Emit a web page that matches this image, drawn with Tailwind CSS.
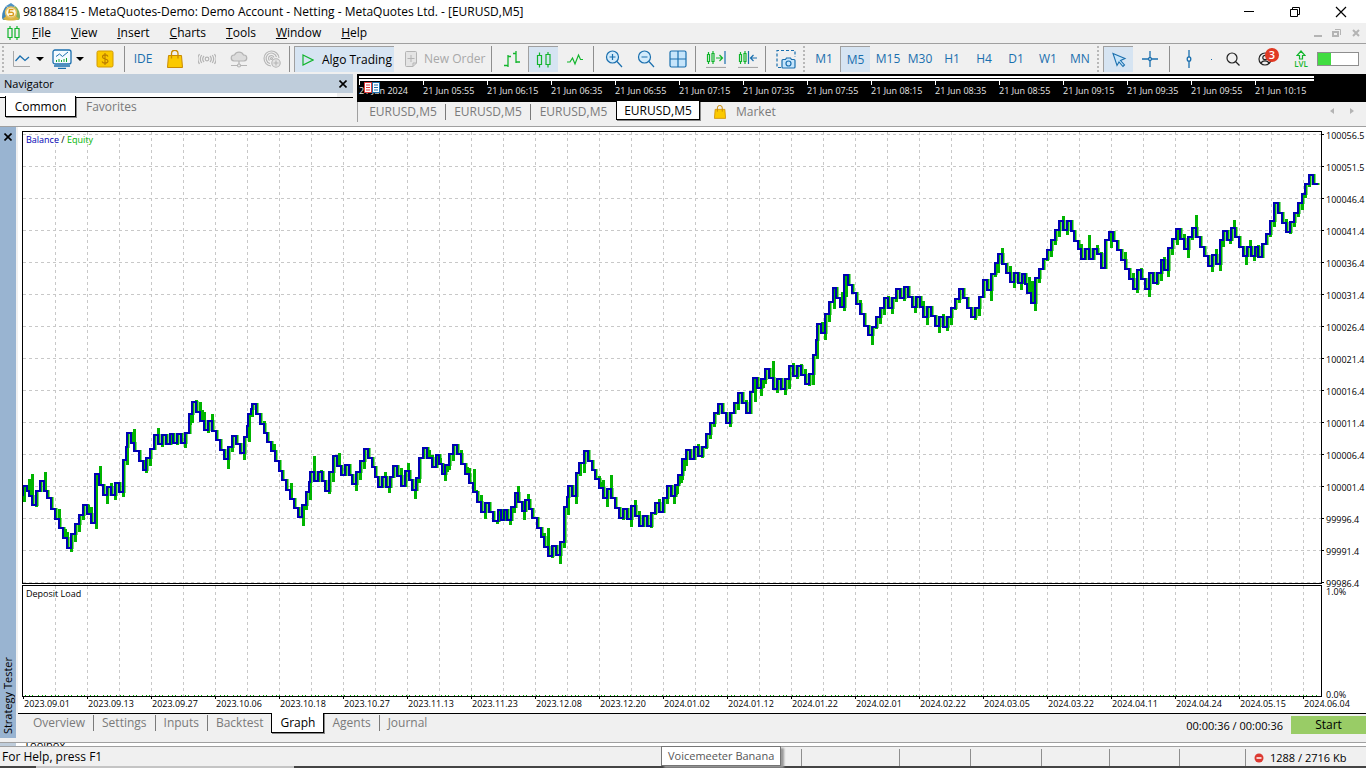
<!DOCTYPE html>
<html lang="en">
<head>
    <meta charset="UTF-8">
    <meta name="viewport" content="width=device-width, initial-scale=1.0">
    <title>MetaTrader 5 - Strategy Tester</title>
    <script src="https://cdn.jsdelivr.net/npm/@tailwindcss/browser@4"></script>
</head>
<body class="h-screen flex flex-col overflow-hidden bg-[#f0f0f0] text-black text-[12px] leading-4 font-['Open_Sans',sans-serif]">

    <!-- shared icons -->
    <svg class="hidden">
        <symbol id="bag" viewBox="0 0 16 18">
            <path d="M1.500 5.500h13l1 12H.5z" fill="#fbc900" stroke="#c98a00"/>
            <path d="M4.500 8.500V3.500a3 3 0 0 1 6.500 0v5" fill="none" stroke="#c98a00" stroke-width="1.300"/>
        </symbol>
    </svg>

    <header class="h-[23px] shrink-0 bg-white flex items-center">
        <svg class="w-5 h-5 ml-px" viewBox="0 0 20 20">
            <path d="M5 4 10 1l4 3-4 3z" fill="#4f93c4"/>
            <path d="M1 15c0-5 2-8 4-11l4 5v9H3c-1.500 0-2-1.500-2-3z" fill="#3f86ba"/>
            <path d="M19 15c0-5-2-9-5-11l-4 5v9h7c1.500 0 2-1.500 2-3z" fill="#7faf5d"/>
            <path d="M2 17c4 2 12 2 16 0l-3-3H5z" fill="#d9b23f"/>
            <circle cx="10" cy="10.500" r="5.500" fill="#fffbe9" stroke="#e3bf5c" stroke-width="1.500"/>
            <path d="M12.500 7.500h-4l-.5 3c3-.8 4.500 0 4.500 1.500 0 2-2.500 2.300-4.500 1.300" fill="none" stroke="#d89a1c" stroke-width="1.500"/>
        </svg>
        <h1 class="ml-0.5 flex-1">98188415 - MetaQuotes-Demo: Demo Account - Netting - MetaQuotes Ltd. - [EURUSD,M5]</h1>
        <button class="w-[46px] h-full flex items-center justify-center" aria-label="Minimize"><svg class="w-3 h-3" viewBox="0 0 12 12"><path d="M1 5.500h10" stroke="#000"/></svg></button>
        <button class="w-[46px] h-full flex items-center justify-center" aria-label="Restore"><svg class="w-3 h-3" viewBox="0 0 12 12" fill="none" stroke="#000"><path d="M1.500 3.500h7v7h-7zM3.500 3V1.500h7v7H9"/></svg></button>
        <button class="w-[46px] h-full mr-0.5 flex items-center justify-center" aria-label="Close"><svg class="w-3 h-3" viewBox="0 0 12 12"><path d="M1 1l10 10M11 1 1 11" stroke="#000" stroke-width="1.200"/></svg></button>
    </header>

    <nav class="h-[21px] shrink-0 border-b border-[#a0a0a0] flex items-center pl-[7px] pr-1.5">
        <svg class="w-3.5 h-4 mr-[11px]" viewBox="0 0 14 16" fill="none" stroke="#12b52c" stroke-width="1.200"><path d="M1 3.500h4v9H1zM3 1v2.500M3 12.500V15M8 3.500h4v9H8zM10 1v2.500M10 12.500V15"/></svg>
        <div class="flex-1 flex gap-5">
            <a href="#"><u>F</u>ile</a>
            <a href="#"><u>V</u>iew</a>
            <a href="#"><u>I</u>nsert</a>
            <a href="#"><u>C</u>harts</a>
            <a href="#"><u>T</u>ools</a>
            <a href="#"><u>W</u>indow</a>
            <a href="#"><u>H</u>elp</a>
        </div>
        <div class="flex items-center gap-2.5">
            <button aria-label="Minimize chart"><svg class="w-2 h-2" viewBox="0 0 8 8"><path d="M0 7h8" stroke="#b4b4b4" stroke-width="2"/></svg></button>
            <button aria-label="Restore chart"><svg class="w-2.5 h-2" viewBox="0 0 10 8" fill="none" stroke="#b4b4b4"><path d="M1 3h5v4H1z" stroke-width="2"/><path d="M3 .5h5.500V6"/></svg></button>
            <button aria-label="Close chart"><svg class="w-2 h-2" viewBox="0 0 8 8"><path d="M1 1l6 6M7 1 1 7" stroke="#b4b4b4" stroke-width="2"/></svg></button>
        </div>
    </nav>

    <div class="h-[30px] shrink-0 flex items-stretch py-0.5 text-[#1a6fae]">
        <span class="w-2 border-l-2 border-dotted border-[#b8b8b8] ml-0.5 -mr-0.5"></span>
        <button class="w-10 flex items-center gap-1.5 pl-1" aria-label="Chart type">
            <svg class="w-[18px] h-5" viewBox="0 0 18 20" fill="none"><path d="M1.500 2v15.500H18" stroke="#a8a8a8"/><path d="M3.500 12 8 7l5 4.500 4-3.500" stroke="#1a6fae" stroke-width="1.300"/></svg>
            <svg class="w-2 h-1" viewBox="0 0 8 4"><path d="M0 0h8L4 4z"/></svg>
        </button>
        <button class="w-10 flex items-center gap-1 pl-1" aria-label="Indicators">
            <svg class="w-5 h-5 shrink-0" viewBox="0 0 20 20" fill="none"><rect x="1" y="1" width="18" height="14" rx="2" fill="#f4faff" stroke="#1a6fae" stroke-width="1.300"/><path d="M4 7.500 7.500 5l3 2.500L16 3" stroke="#1a6fae"/><path d="M4.500 13v-2M7 13v-3M9.500 13v-2M12 13v-3M14.500 13V9" stroke="#12a52c"/><path d="M2 17h16M6 19.500h8" stroke="#1a6fae" stroke-width="1.300"/></svg>
            <svg class="w-2 h-1 shrink-0" viewBox="0 0 8 4"><path d="M0 0h8L4 4z"/></svg>
        </button>
        <button class="w-[33px] flex items-center justify-center" aria-label="Symbols">
            <svg class="w-[18px] h-[18px]" viewBox="0 0 18 18"><rect x="1" y="1" width="16" height="16" rx="1.500" fill="#fbc900" stroke="#d29a00"/><path d="M12 6.500C11 4 6.500 4.500 6.500 7S12 8.500 12 11s-5 3-6 .5M9 3v12" fill="none" stroke="#b87a00" stroke-width="1.100"/></svg>
        </button>
        <span class="w-1.5 flex justify-center"><i class="w-px bg-[#8e8e8e]"></i></span>
        <button class="w-8 text-center">IDE</button>
        <button class="w-8 flex items-center justify-center" aria-label="Market"><svg class="w-4 h-[18px]"><use href="#bag"/></svg></button>
        <button class="w-8 flex items-center justify-center" aria-label="Signals"><svg class="w-[18px] h-[18px]" viewBox="0 0 18 18" fill="none" stroke="#b4b4b4" stroke-width="1.200"><circle cx="9" cy="9" r="1.800"/><path d="M6 6a4.500 4.500 0 0 0 0 6M12 6a4.500 4.500 0 0 1 0 6M3.700 5a7 7 0 0 0 0 8M14.300 5a7 7 0 0 1 0 8M1.500 4a9 9 0 0 0 0 10M16.500 4a9 9 0 0 1 0 10"/></svg></button>
        <button class="w-8 flex items-center justify-center" aria-label="Virtual hosting"><svg class="w-[18px] h-[18px]" viewBox="0 0 18 18" fill="none" stroke="#b4b4b4" stroke-width="1.200"><path d="M4 11a3 3 0 0 1 .5-6A5 5 0 0 1 13.500 5 3 3 0 0 1 14 11z" fill="#dcdcdc"/><path d="M9 11v3M1 15.500h6.500M10.500 15.500H17"/><circle cx="9" cy="15.500" r="1.500"/></svg></button>
        <button class="w-[33px] flex items-center justify-center" aria-label="Network agents"><svg class="w-[18px] h-[18px]" viewBox="0 0 18 18" fill="none" stroke="#b4b4b4" stroke-width="1.100"><path d="M8 16A7.500 7.500 0 1 1 16 8M7 13.500A5.300 5.300 0 1 1 13.500 7M6.500 10.500A2.800 2.800 0 1 1 11 7.500"/><circle cx="8.500" cy="8.500" r="1"/><circle cx="13" cy="13" r="4.200" fill="#e4e4e4"/><path d="M13 10.500v5M10.500 13h5"/></svg></button>
        <span class="w-1.5 pl-px"><i class="block h-full w-px bg-[#8e8e8e]"></i></span>
        <button class="w-[100px] flex items-center gap-2 pl-[7px] bg-[#d6e4f2] border-l border-t border-[#a0a0a0] text-black whitespace-nowrap">
            <svg class="w-3 h-3 shrink-0" viewBox="0 0 12 12"><path d="M1 1l10 5-10 5z" fill="none" stroke="#12b52c" stroke-width="1.200"/></svg>
            Algo Trading
        </button>
        <button class="w-24 flex items-center gap-1.5 pl-2.5 text-[#a8a8a8] whitespace-nowrap">
            <svg class="w-3.5 h-[18px] shrink-0" viewBox="0 0 14 18" fill="#e4e4e4" stroke="#b4b4b4"><path d="M2.500 1.500h9a1 1 0 0 1 1 1V13l-3.500 3.500H2.500a1 1 0 0 1-1-1v-13a1 1 0 0 1 1-1zM9 16.500V13h3.500M7 5v7M3.500 8.500h7"/></svg>
            New Order
        </button>
        <span class="w-1.5 pl-px"><i class="block h-full w-px bg-[#8e8e8e]"></i></span>
        <button class="w-8 flex items-center justify-center" aria-label="Bar chart"><svg class="w-[18px] h-[18px]" viewBox="0 0 18 18" fill="none" stroke="#12b52c" stroke-width="1.300"><path d="M5 5v12M1 15.500h4M5 6.500h3M13 1v12M10 3.500h3M13 12h4"/></svg></button>
        <button class="w-[30px] flex items-center justify-center bg-[#d6e4f2] border-l border-t border-[#a0a0a0]" aria-label="Candlesticks"><svg class="w-4 h-[18px]" viewBox="0 0 16 18" fill="none" stroke="#12b52c" stroke-width="1.200"><path d="M1.500 4.500h4v9h-4zM3.500 1.500v3M3.500 13.500v3M10 3.500h4v10h-4zM12 1v2.500M12 13.500v3"/></svg></button>
        <button class="w-[34px] flex items-center justify-center" aria-label="Line chart"><svg class="w-[18px] h-[18px]" viewBox="0 0 18 18" fill="none" stroke="#12b52c" stroke-width="1.200"><path d="M1 12h3l2.500-4L9 14l3.500-9 2 4.500H17"/></svg></button>
        <span class="w-1.5 pl-px"><i class="block h-full w-px bg-[#8e8e8e]"></i></span>
        <button class="w-8 flex items-center justify-center" aria-label="Zoom in"><svg class="w-[18px] h-[18px]" viewBox="0 0 18 18" fill="#d3ebfb" stroke="#1a6fae" stroke-width="1.200"><circle cx="7.500" cy="7" r="6"/><path d="M12 11.500l5 5.500M4.500 7h6M7.500 4v6"/></svg></button>
        <button class="w-8 flex items-center justify-center" aria-label="Zoom out"><svg class="w-[18px] h-[18px]" viewBox="0 0 18 18" fill="#d3ebfb" stroke="#1a6fae" stroke-width="1.200"><circle cx="7.500" cy="7" r="6"/><path d="M12 11.500l5 5.500M4.500 7h6"/></svg></button>
        <button class="w-8 flex items-center justify-center" aria-label="Tile windows"><svg class="w-[18px] h-[18px]" viewBox="0 0 18 18" fill="#c6e5fb" stroke="#1a6fae" stroke-width="1.200"><rect x="1" y="1" width="16" height="16" rx="1.500"/><path d="M9 1v16M1 9h16"/></svg></button>
        <span class="w-1.5 pl-px"><i class="block h-full w-px bg-[#8e8e8e]"></i></span>
        <button class="w-8 flex items-center justify-center" aria-label="Auto scroll"><svg class="w-5 h-[18px]" viewBox="0 0 20 18" fill="none" stroke="#12b52c" stroke-width="1.200"><path d="M1.500 4.500h2v7h-2zM2.500 2v2.500M2.500 11.500V14M6 3.500h2v8H6zM7 1v2.500M7 11.500V14M10 8h6M13.500 5l3 3-3 3"/><path d="M19 1v13" stroke="#1a6fae"/><path d="M0 17.500h20" stroke="#a8a8a8"/></svg></button>
        <button class="w-8 flex items-center justify-center" aria-label="Chart shift"><svg class="w-5 h-[18px]" viewBox="0 0 20 18" fill="none" stroke="#12b52c" stroke-width="1.200"><path d="M1.500 4.500h2v7h-2zM2.500 2v2.500M2.500 11.500V14M6 3.500h2v8H6zM7 1v2.500M7 11.500V14"/><path d="M10.500 1v13M19 8h-6M15.500 5l-3 3 3 3" stroke="#1a6fae"/><path d="M0 17.500h20" stroke="#a8a8a8"/></svg></button>
        <span class="w-1.5 pl-px"><i class="block h-full w-px bg-[#8e8e8e]"></i></span>
        <button class="w-8 flex items-center justify-center" aria-label="Screenshot"><svg class="w-5 h-5" viewBox="0 0 20 20" fill="none" stroke="#1a6fae" stroke-width="1.200"><path d="M5 18.500H1v-17h18V8" stroke-dasharray="3 2"/><path d="M7 10.500h2.500l1-1.500h4l1 1.500H18a1 1 0 0 1 1 1V18a1 1 0 0 1-1 1H7a1 1 0 0 1-1-1v-6.500a1 1 0 0 1 1-1z" fill="#c6e5fb"/><circle cx="12.500" cy="14.500" r="2.500"/></svg></button>
        <span class="w-1.5 pl-px"><i class="block h-full border-l-2 border-dotted border-[#b8b8b8]"></i></span>
        <button class="w-8">M1</button>
        <button class="w-[30px] mr-0.5 bg-[#d6e4f2] border-l border-t border-[#a0a0a0]">M5</button>
        <button class="w-8">M15</button>
        <button class="w-8">M30</button>
        <button class="w-8">H1</button>
        <button class="w-8">H4</button>
        <button class="w-8">D1</button>
        <button class="w-8">W1</button>
        <button class="w-8">MN</button>
        <span class="w-[7px] pl-px"><i class="block h-full border-l-2 border-dotted border-[#b8b8b8]"></i></span>
        <button class="w-[30px] flex items-center justify-center bg-[#d6e4f2] border-l border-t border-[#a0a0a0]" aria-label="Cursor"><svg class="w-4 h-4" viewBox="0 0 16 16"><path d="M2 1.500l12 5-4.500 2 4 4.500-1.500 1.500-4-4.500L6 13.500z" fill="#c6e5fb" stroke="#1a6fae" stroke-width="1.100"/></svg></button>
        <button class="w-[34px] flex items-center justify-center" aria-label="Crosshair"><svg class="w-[18px] h-[18px]" viewBox="0 0 18 18" fill="none" stroke="#1a6fae" stroke-width="1.300"><path d="M9 1v6M9 11v6M1 9h6M11 9h6M7 9l2-2 2 2-2 2z"/></svg></button>
        <span class="w-1.5 pl-0.5"><i class="block h-full w-px bg-[#8e8e8e]"></i></span>
        <button class="w-8 flex items-center justify-center" aria-label="Vertical line"><svg class="w-[18px] h-[18px]" viewBox="0 0 18 18" fill="none" stroke="#1a6fae" stroke-width="1.300"><path d="M9 0v7M9 11v7"/><ellipse cx="9" cy="9" rx="1.800" ry="2.200"/></svg></button>
        <span class="w-3 flex items-center justify-center"><i class="w-px h-px bg-[#1a6fae]"></i></span>
        <button class="w-8 flex items-center justify-center" aria-label="Search"><svg class="w-3.5 h-3.5" viewBox="0 0 14 14" fill="none" stroke="#222" stroke-width="1.200"><circle cx="6" cy="6" r="5"/><path d="M9.500 9.500 13.500 13.500"/></svg></button>
        <button class="relative w-8 flex items-center justify-center" aria-label="Account, 3 messages">
            <svg class="w-3.5 h-3.5" viewBox="0 0 14 14" fill="none" stroke="#222" stroke-width="1.200"><circle cx="7" cy="7" r="6"/><circle cx="7" cy="5.500" r="2.200"/><path d="M3 11.500c1-3.500 7-3.500 8 0"/></svg>
            <span class="absolute left-4 top-0.5 w-3.5 h-3.5 rounded-full bg-[#e03a24] text-white text-[11px] leading-3.5 font-semibold text-center">3</span>
        </button>
        <button class="w-9 pl-1 flex flex-col items-center justify-center text-[#12b52c]" aria-label="Level">
            <svg class="w-2.5 h-2.5" viewBox="0 0 10 10" fill="none" stroke="#12b52c" stroke-width="1.200"><path d="M3.500 9V5.500H1L5 1l4 4.500H6.500V9z"/></svg>
            <span class="text-[8px] leading-2 font-semibold">LVL</span>
        </button>
        <span class="self-center w-[42px] h-3.5 border border-[#8e8e8e] bg-white"><i class="block w-[13px] h-full bg-[#41dd41]"></i></span>
    </div>

    <div class="h-[53px] shrink-0 border-b border-[#a0a0a0] flex">
        <section class="w-[353px] shrink-0 flex flex-col">
            <div class="h-[19px] bg-[#bfcddb] flex items-center justify-between pl-1 pr-1.5 text-[11px]">
                <h2>Navigator</h2>
                <button aria-label="Close navigator"><svg class="w-2 h-2" viewBox="0 0 8 8"><path d="M.5.5l7 7M7.500.5l-7 7" stroke="#000" stroke-width="1.600"/></svg></button>
            </div>
            <div class="h-1 bg-white mr-4"></div>
            <div class="flex items-start text-[#7a7a7a]">
                <span class="w-[5px] border-t border-black"></span>
                <button class="w-[71px] h-[21px] -mt-px pt-0.5 bg-white border-x border-b border-black text-black shadow-[1px_1px_0_#888]">Common</button>
                <button class="flex-1 border-t border-black text-left pl-2.5 pt-px">Favorites</button>
            </div>
        </section>
        <section class="flex-1 min-w-0 ml-1 flex flex-col">
            <div class="relative h-7 pt-0.5 bg-black text-[#e6e6e6] text-[9px] leading-3 overflow-hidden">
                <div class="h-[5px] ml-0.5 mr-[52px] border-y-2 border-white"></div>
                <div id="ruler" class="flex pl-0.5"></div>
                <svg class="absolute left-[7px] top-2 w-4 h-3" viewBox="0 0 16 12"><path d="M.5.5h7v10h-7z" fill="#fff" stroke="#e03a3a"/><path d="M8.500.5h7v10h-7z" fill="#fff" stroke="#1a6fae"/><path d="M2 3h4M2 5.500h4M2 8h4" stroke="#e03a3a"/><path d="M10 3h4M10 5.500h4M10 8h4" stroke="#1a6fae"/></svg>
            </div>
            <div class="flex-1 flex items-start text-[#7a7a7a]">
                <span class="w-1 h-5 border-l border-[#a0a0a0]"></span>
                <button class="w-[85px] h-4 mt-0.5 border-r border-[#7a7a7a]">EURUSD,M5</button>
                <button class="w-[85px] h-4 mt-0.5 border-r border-[#7a7a7a]">EURUSD,M5</button>
                <button class="w-[85px] h-4 mt-0.5">EURUSD,M5</button>
                <button class="w-[84px] h-[19px] -mt-px pt-0.5 bg-white border border-t-0 border-black text-black shadow-[1px_1px_0_#888] z-10">EURUSD,M5</button>
                <button class="flex items-center gap-2.5 ml-3.5 mt-0.5"><svg class="w-3 h-3.5"><use href="#bag"/></svg>Market</button>
                <div class="ml-auto mr-3 mt-1.5 flex gap-4">
                    <button aria-label="Previous tab"><svg class="w-1 h-1.5" viewBox="0 0 4 6"><path d="M4 0v6L0 3z" fill="#b4b4b4"/></svg></button>
                    <button aria-label="Next tab"><svg class="w-1 h-1.5" viewBox="0 0 4 6"><path d="M0 0v6l4-3z" fill="#b4b4b4"/></svg></button>
                </div>
            </div>
        </section>
    </div>

    <main class="flex-1 min-h-0 flex">
        <aside class="w-4 shrink-0 mb-1 mr-0.5 bg-[#99b4d1] flex flex-col items-center justify-between pt-1.5 pb-1">
            <button aria-label="Close tester"><svg class="w-2 h-2" viewBox="0 0 8 8"><path d="M.5.5l7 7M7.500.5l-7 7" stroke="#000" stroke-width="1.600"/></svg></button>
            <h2 class="[writing-mode:vertical-rl] rotate-180 text-[11px] leading-4">Strategy Tester</h2>
        </aside>
        <section class="flex-1 min-w-0 flex flex-col">
            <div class="flex-1 min-h-0 flex flex-col bg-white pl-1 pt-1 text-[9px] leading-[9px]">
                <div class="flex-1 min-h-0 flex">
                    <div class="relative flex-1 min-w-0 border border-black">
                        <svg id="plot" class="absolute inset-0 w-full h-full" fill="none"></svg>
                        <p class="relative pl-[3px] pt-[3px]"><span class="text-[#0000b4]">Balance</span> / <span class="text-[#00b400]">Equity</span></p>
                    </div>
                    <div id="values" class="w-[44px] shrink-0"></div>
                </div>
                <div class="h-28 shrink-0 mt-px flex">
                    <div class="relative flex-1 min-w-0 border border-black">
                        <svg id="load" class="absolute inset-0 w-full h-full" fill="none"></svg>
                        <p class="relative pl-[3px] pt-[3px]">Deposit Load</p>
                    </div>
                    <div class="w-[44px] shrink-0 flex flex-col justify-between pl-1 pt-[3px] leading-2">
                        <span>1.0%</span><span class="-mb-0.5">0.0%</span>
                    </div>
                </div>
                <div id="dates" class="h-4 shrink-0 flex pl-px overflow-hidden"></div>
            </div>
            <div class="h-[29px] shrink-0 flex items-stretch text-[#7a7a7a]">
                <div class="flex-1 flex items-start">
                    <div class="flex border-t border-black pl-[7px] h-[18px] items-end">
                        <button class="px-2 border-r border-[#7a7a7a]">Overview</button>
                        <button class="px-2 border-r border-[#7a7a7a]">Settings</button>
                        <button class="px-2 border-r border-[#7a7a7a]">Inputs</button>
                        <button class="px-2">Backtest</button>
                    </div>
                    <button class="h-5 px-2 bg-white border border-t-0 border-black text-black shadow-[1px_1px_0_#888]">Graph</button>
                    <div class="flex-1 flex border-t border-black h-[18px] items-end">
                        <button class="px-2 border-r border-[#7a7a7a]">Agents</button>
                        <button class="px-2">Journal</button>
                    </div>
                </div>
                <div class="border-t border-black flex items-start pt-0.5 text-black text-[11px]">
                    <span class="pt-0.5 pr-2">00:00:36 / 00:00:36</span>
                    <button class="w-[75px] h-[18px] bg-[#99cc66] text-[12px]">Start</button>
                </div>
            </div>
        </section>
    </main>

    <div class="h-[5px] shrink-0 border-y border-[#a0a0a0] bg-white overflow-hidden flex">
        <span class="w-4 bg-[#bfcddb]"></span>
        <span class="pl-2 text-[11px] leading-1">Toolbox</span>
    </div>
    <footer class="relative h-[19px] shrink-0 flex items-center pl-0.5">
        <span class="flex-1">For Help, press F1</span>
        <div class="h-full pt-0.5 flex">
            <span class="w-[98px] border-l border-[#8e8e8e]"></span>
            <span class="w-[71px] border-l border-[#8e8e8e]"></span>
            <span class="w-[71px] border-l border-[#8e8e8e]"></span>
            <span class="w-[68px] border-l border-[#8e8e8e]"></span>
            <span class="w-[70px] border-l border-[#8e8e8e]"></span>
            <span class="w-[66px] border-l border-[#8e8e8e]"></span>
            <span class="w-[121px] border-l border-[#8e8e8e] flex items-center gap-1.5 pl-2">
                <svg class="w-2.5 h-2.5" viewBox="0 0 10 10"><circle cx="5" cy="5" r="4.500" fill="#dc3a32"/><path d="M2.500 5h5" stroke="#fff" stroke-width="1.500"/></svg>
                <span class="text-[11px]">1288 / 2716 Kb</span>
            </span>
        </div>
        <div class="absolute left-[661px] -top-px h-5 px-1.5 border border-[#767676] bg-white text-[#575757] text-[11px] leading-[18px] shadow-[3px_2px_2px_#999] z-10" role="tooltip">Voicemeeter Banana</div>
    </footer>
    <div class="h-0.5 shrink-0 bg-[#444] pl-9"><i class="block w-[258px] h-full bg-[#c4c4c4]"></i></div>

    <script>
        const times = ["21 Jun 2024", "21 Jun 05:55", "21 Jun 06:15", "21 Jun 06:35", "21 Jun 06:55", "21 Jun 07:15", "21 Jun 07:35", "21 Jun 07:55", "21 Jun 08:15", "21 Jun 08:35", "21 Jun 08:55", "21 Jun 09:15", "21 Jun 09:35", "21 Jun 09:55", "21 Jun 10:15"];
        const dates = ["2023.09.01", "2023.09.13", "2023.09.27", "2023.10.06", "2023.10.18", "2023.10.27", "2023.11.13", "2023.11.23", "2023.12.08", "2023.12.20", "2024.01.02", "2024.01.12", "2024.01.22", "2024.02.01", "2024.02.22", "2024.03.05", "2024.03.22", "2024.04.11", "2024.04.24", "2024.05.15", "2024.06.04"];
        const values = ["100056.5", "100051.5", "100046.4", "100041.4", "100036.4", "100031.4", "100026.4", "100021.4", "100016.4", "100011.4", "100006.4", "100001.4", "99996.4", "99991.4", "99986.4"];

        document.getElementById("ruler").innerHTML = times.map(t =>
            `<span class="w-16 shrink-0 whitespace-nowrap"><i class="block w-px h-1 bg-white"></i>${t}</span>`).join("");
        document.getElementById("dates").innerHTML = dates.map(d =>
            `<span class="w-16 shrink-0 whitespace-nowrap"><i class="block w-px h-0.5 bg-black"></i><span class="pl-px">${d}</span></span>`).join("");
        document.getElementById("values").innerHTML = values.map(v =>
            `<span class="h-8 flex items-start"><i class="w-0.5 h-px mt-[3px] mr-0.5 bg-black"></i>${v}</span>`).join("");

        // each part of the curve has an origin and points in thirds of a pixel;
        // "steps" is the balance, "spikes" is how far the equity leaves it
        const parts = [
            { x: -3, y: 258,
              steps: "8,318 10,288 22,303 28,318 36,345 48,303 60,274 72,303 82,325 92,357 104,387 116,415 128,445 142,474 153,432 165,402 178,375 190,345 202,372 213,400 226,252 237,285 250,315 261,290 273,315 286,280 297,305 309,211 318,171 322,130 334,160 343,183 356,213 368,240 378,205 391,178 402,135 414,162 427,135 438,162 450,133 460,158 472,133 484,160 496,130 506,72 517,36 529,65 541,93 553,120 565,93 577,122 588,150 600,180 612,207 625,172 637,137 649,162 661,190 672,142 681,107 685,72 693,56 697,42 708,72 720,102 732,128 742,156 753,183 765,213 776,242 787,270 799,299 810,328 823,354 835,381 847,346 858,307 867,275 871,246 883,273 895,246 907,273 916,303 928,246 940,198 952,228",
              spikes: "12,335 28,267 37,252 48,350 75,245 118,357 136,418 142,425 153,485 165,457 176,425 190,390 205,345 212,350 227,417 240,228 262,342 273,278 285,330 309,320 321,225 343,117 378,250 390,228 414,113 427,170 472,165 495,175 511,105 517,100 529,30 540,37 546,60 552,65 565,130 577,72 625,236 637,187 673,210 686,157 697,80 708,42 733,93 763,162 814,279 850,408 859,360 871,330 882,198 902,240 928,312 940,275 958,188" },
            { x: 317, y: 258,
              steps: "4,255 16,225 27,255 37,283 49,247 61,213 72,177 84,205 96,232 105,262 115,290 127,262 137,290 149,262 160,229 171,259 184,288 195,243 207,270 217,300 228,265 237,205 250,174 262,204 275,232 287,195 298,222 305,253 316,226 328,192 340,165 352,192 364,222 376,252 388,280 400,307 412,337 424,366 436,340 448,366 460,393 473,361 484,390 492,361 502,390 512,352 524,309 535,337 547,362 554,330 566,358 577,385 590,415 602,441 613,471 625,498 637,468 648,495 660,457 672,352 681,321 685,288 697,318 707,248 718,220 733,183 744,213 756,240 766,267 778,294 790,324 802,297 814,324 826,355 838,385 850,358 862,387 874,348 886,378 898,408",
              spikes: "48,303 61,270 73,238 84,180 120,293 136,245 147,308 184,235 205,220 226,328 238,280 266,180 275,195 301,205 316,272 322,245 328,240 338,212 364,180 382,232 388,235 403,236 409,300 424,315 436,387 472,402 510,405 522,370 534,288 552,390 565,312 603,410 613,430 625,413 636,503 660,522 673,473 685,375 709,343 721,258 733,248 778,258 784,275 790,270 802,350 814,255 850,390 874,410 886,330 898,362" },
            { x: 617, y: 128,
              steps: "10,768 22,799 34,760 46,730 58,757 69,715 81,679 93,708 105,675 115,645 127,598 139,571 151,598 163,561 175,589 187,561 199,523 211,490 223,459 235,432 247,459 259,490 270,460 283,429 295,399 307,429 318,460 330,396 340,354 352,384 364,357 376,327 388,355 400,387 412,357 424,387 436,357 448,318 460,347 472,318 484,345 496,373 508,343 519,286 527,240 531,193 543,219 555,162 567,126 579,84 589,114 601,141 613,45 625,75 637,100 649,132 661,162 673,198 685,225 697,200 709,171 721,144 733,114 745,145 757,114 769,87 781,114 793,81 805,112 817,141 829,112 840,141 850,171 862,141 874,168 886,198 898,171 909,202 922,171 934,144 946,118 958,87",
              spikes: "34,803 46,765 57,717 70,757 81,732 102,732 108,705 112,702 118,672 123,668 126,660 132,632 138,617 174,551 187,594 199,568 211,536 223,500 235,466 270,500 283,462 295,450 318,420 330,460 345,425 364,408 370,385 375,372 400,303 412,398 435,404 448,387 459,309 472,358 484,312 496,327 508,378 520,375 531,296 547,187 556,240 568,186 583,148 606,95 613,153 619,110 661,120 697,256 709,208 721,192 733,166 745,107 757,163 769,125 793,122 825,160 838,112 850,124 862,195 898,219 909,162 922,213 934,196 946,150 958,128" },
            { x: 937, y: 28,
              steps: "10,415 22,444 34,472 44,444 56,412 68,360 80,390 94,342 104,310 115,282 127,312 138,340 150,367 162,340 174,369 186,342 196,372 202,400 213,429 226,355 238,327 250,297 262,270 274,240 286,211 298,183 310,211 322,183 334,213 343,243 355,268 364,298 376,268 388,298 400,268 412,283 424,324 436,240 448,215 459,243 471,271 483,300 496,327 508,356 520,387 532,330 544,358 556,387 568,340 580,370 591,340 602,300 613,330 625,265 637,238 649,207 661,237 673,267 685,231 697,205 709,231 721,260 733,289 745,318 757,286 768,312 780,240 790,213 800,240 812,204 824,232 836,260 848,288 860,260 872,289 884,262 895,292 907,253 918,222 930,184 942,130 955,158 967,188 979,217 991,187 1002,158 1013,130 1025,102 1035,73 1048,45 1060,72 1074,72",
              spikes: "46,480 58,467 70,415 94,424 106,350 115,338 127,264 150,318 163,385 183,390 208,350 215,362 226,453 238,368 250,330 262,303 274,290 286,255 298,230 309,168 322,225 362,252 376,300 388,225 400,300 412,255 424,277 436,325 452,265 460,215 496,276 520,340 532,400 544,325 568,410 590,375 602,362 613,292 625,352 637,285 650,255 661,205 673,222 685,294 697,240 709,165 757,337 769,267 780,333 790,260 810,252 823,180 848,280 858,316 871,240 883,303 895,255 907,292 919,250 931,232 943,200 955,132 979,178 990,222 1002,200 1015,172 1025,150 1035,115 1046,82 1060,42" }
        ];

        const read = (part, text) => text.split(" ").map(pair => {
            const [x, y] = pair.split(",").map(Number);
            return [Math.round(part.x + x / 3), Math.round(part.y + y / 3)];
        });
        const steps = parts.flatMap(part => read(part, part.steps)).sort((a, b) => a[0] - b[0]);
        const spikes = parts.flatMap(part => read(part, part.spikes));

        let balance = `M${steps[0][0]} ${steps[0][1]}`;
        steps.slice(1).forEach(([x, y]) => balance += `H${x}V${y}`);
        const levelAt = (x) => steps.filter(s => s[0] <= x).pop() || steps[0];
        const equity = spikes.map(([x, y]) => `M${x}.5 ${levelAt(x)[1]}V${y}`).join("");

        let columns = "";
        for (let x = 32; x < 4000; x += 32) columns += `M${x}.5 0V2000`;
        let rows = "";
        for (let y = 2; y < 2000; y += 32) rows += `M0 ${y}.5H4000`;
        const grid = (d) => `<path d="${d}" stroke="#c8c8c8" stroke-dasharray="3 3"/>`;

        document.getElementById("plot").innerHTML = grid(columns) + grid(rows) +
            `<path d="${balance}" stroke="#00b400" stroke-width="2" transform="translate(1.5 0)"/>` +
            `<path d="${equity}" stroke="#00b400" stroke-width="3"/>` +
            `<path d="${balance}" stroke="#0000b4" stroke-width="2"/>`;
        document.getElementById("load").innerHTML = grid(columns) +
            `<path d="M2 109.500H1296" stroke="#00b400" stroke-dasharray="1 3 1 2 1 5"/>`;
    </script>
</body>
</html>
